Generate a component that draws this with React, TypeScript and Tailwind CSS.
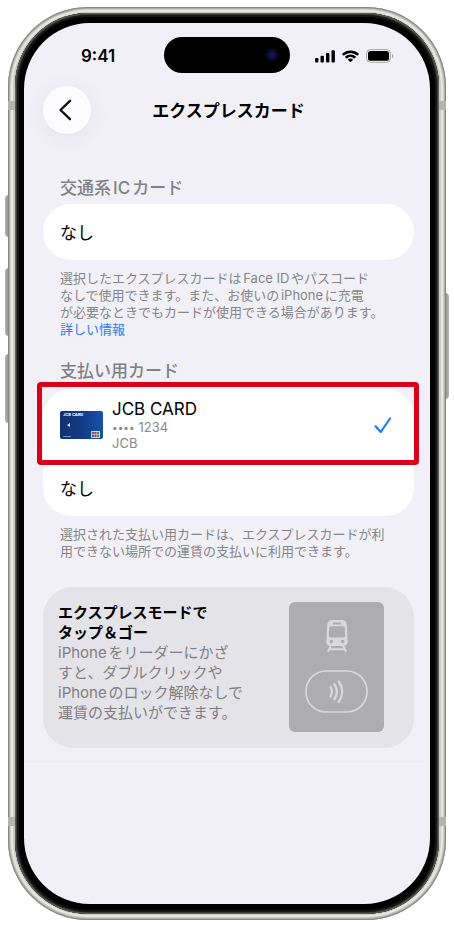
import React, { useState } from "react";

function StatusBar() {
  return (
    <div className="grid h-[63px] grid-cols-[1fr_126px_1fr] pt-[14px]">
      <div className="flex h-[38px] items-center pl-[57px] text-[17px] font-semibold leading-5">9:41</div>
      <div className="flex h-9 items-center justify-end rounded-full bg-black pr-3">
        <span className="flex size-3 items-center justify-center rounded-full bg-[#0b0b2c]">
          <span className="size-1.5 rounded-full bg-[#14145c]" />
        </span>
      </div>
      <div className="flex h-[38px] items-center justify-end gap-[7px] pr-9">
        <svg width="20" height="13" viewBox="0 0 20 13" aria-hidden="true">
          <rect x="0" y="8" width="3.4" height="4.5" rx="1" />
          <rect x="5.5" y="5.7" width="3.4" height="6.8" rx="1" />
          <rect x="11" y="3" width="3.4" height="9.5" rx="1" />
          <rect x="16.5" y="0.2" width="3.4" height="12.3" rx="1" />
        </svg>
        <svg width="17" height="13" viewBox="0 0 17 13" aria-hidden="true">
          <path d="M8.5 0.4C5.3 0.4 2.4 1.6 0.2 3.7a.4.4 0 0 0 0 .6l1.2 1.2c.2.2.4.2.6 0a9.4 9.4 0 0 1 13 0c.2.2.4.2.6 0l1.2-1.2a.4.4 0 0 0 0-.6A12 12 0 0 0 8.5.4Z" />
          <path d="M8.5 4.5c-2 0-3.9.8-5.3 2.1a.4.4 0 0 0 0 .6l1.2 1.2c.2.2.4.2.6 0a5.2 5.2 0 0 1 7 0c.2.2.4.2.6 0l1.2-1.2a.4.4 0 0 0 0-.6A7.7 7.7 0 0 0 8.5 4.5Z" />
          <path d="M8.5 8.5c-1 0-1.8.4-2.4.9a.4.4 0 0 0 0 .6l2.100 2.100c.2.2.4.2.6 0l2.100-2.100a.4.4 0 0 0 0-.6c-.6-.5-1.400-.9-2.400-.9Z" />
        </svg>
        <svg width="28" height="14" viewBox="0 0 28 14" aria-hidden="true">
          <rect x="0.5" y="0.5" width="24" height="12.8" rx="4" fill="none" stroke="#a9a8ad" />
          <rect x="2" y="2" width="21" height="9.8" rx="2.6" />
          <path d="M26 4.7v4.6c.9-.4 1.5-1.3 1.5-2.3S26.9 5.100 26 4.700Z" fill="#a9a8ad" />
        </svg>
      </div>
    </div>
  );
}

function CardArt() {
  return (
    <div className="flex h-[28px] w-[43px] shrink-0 flex-col justify-between rounded-[2px] bg-linear-to-r from-[#12306e] via-[#123a86] to-[#1753a8] px-[3px] py-px text-white">
      <span className="whitespace-nowrap text-[4px] font-bold leading-[6px]">JCB CARD</span>
      <svg width="5" height="4" viewBox="0 0 5 4" className="ml-[3px]" aria-hidden="true">
        <path d="M4 0 1 2l3 2Z" fill="#dfe6f5" />
      </svg>
      <div className="flex items-end justify-between">
        <span className="mb-px h-px w-2 bg-[#6f8ec4]" />
        <svg width="9" height="7" viewBox="0 0 9 7" aria-hidden="true">
          <rect width="9" height="7" rx="1" fill="#f2f2f2" />
          <rect x="0.800" y="0.800" width="2.200" height="5.400" rx=".6" fill="#2760b8" />
          <rect x="3.400" y="0.800" width="2.200" height="5.400" rx=".6" fill="#d81e3c" />
          <rect x="6" y="0.800" width="2.200" height="5.400" rx=".6" fill="#239a4b" />
          <path d="M1 3.500h7" stroke="#f2f2f2" strokeWidth=".6" />
        </svg>
      </div>
    </div>
  );
}

function ReaderArt() {
  return (
    <div className="flex h-[130px] w-[95px] shrink-0 flex-col items-center rounded-md bg-[#adadb0] pt-[18px]">
      <svg width="22" height="32" viewBox="0 0 22 32" aria-hidden="true">
        <path
          fill="#d9d9dc"
          fillRule="evenodd"
          d="M6.500 0h9C18.800 0 20.600 1.800 20.800 5L21.600 21.500c.1 2.800-1.500 4.500-4.300 4.500H4.700C1.900 26 .3 24.300.4 21.500L1.200 5C1.400 1.800 3.200 0 6.500 0ZM7.700 2.600a1 1 0 0 0 0 2h6.600a1 1 0 0 0 0-2ZM5.300 6.200c-1.300 0-2.100.8-2.200 2.100L2.800 15.200c0 1.500.8 2.400 2.200 2.400h12c1.400 0 2.200-.9 2.200-2.400L18.900 8.300c-.1-1.300-.9-2.100-2.200-2.100ZM5.300 19.800a1.800 1.800 0 1 0 0 3.600 1.800 1.800 0 0 0 0-3.600Zm11.400 0a1.800 1.800 0 1 0 0 3.600 1.800 1.800 0 0 0 0-3.600Z"
        />
        <path d="M4.800 26 2.300 31M17.200 26l2.500 5M4 29.300h14" stroke="#d9d9dc" strokeWidth="1.900" strokeLinecap="round" fill="none" />
      </svg>
      <svg width="63" height="43" viewBox="0 0 63 43" className="mt-[18px]" fill="none" stroke="#d9d9dc" strokeLinecap="round" aria-hidden="true">
        <rect x="1" y="1" width="61" height="41" rx="20" strokeWidth="1.700" />
        <path d="M25.500 17q2.800 4.500 0 9.500M29.500 14.300q4.800 7.200 0 14.800M33.800 11.500q7 10 0 20.400" strokeWidth="2.300" />
      </svg>
    </div>
  );
}

function Check() {
  return (
    <svg width="18" height="17" viewBox="0 0 18 17" className="invisible shrink-0 peer-checked:visible" aria-hidden="true">
      <path d="M1.500 9.300 6.800 15 16 1.500" fill="none" stroke="#1f7cf5" strokeWidth="2.200" strokeLinecap="round" strokeLinejoin="round" />
    </svg>
  );
}

function SectionTitle({ children }: { children: React.ReactNode }) {
  return <h2 className="px-[17px] text-[17px] font-medium leading-6 text-[#818085]">{children}</h2>;
}

function Note({ children }: { children: React.ReactNode }) {
  return <p className="mt-[10px] whitespace-nowrap px-[17px] text-[13px] leading-[17px] text-[#86858a]">{children}</p>;
}

export default function App() {
  const [card, setCard] = useState("jcb");

  return (
    <main className="min-h-screen bg-white px-2 py-[7px] font-['Inter','Noto_Sans_CJK_JP',sans-serif] text-black [text-autospace:normal]">
      <div className="relative">
        <span className="absolute -left-[3px] top-[188px] h-[42px] w-1 rounded-l-sm bg-linear-to-r from-[#b4b4b1] to-[#8d8d8a]" />
        <span className="absolute -left-[3px] top-[261px] h-[68px] w-1 rounded-l-sm bg-linear-to-r from-[#b4b4b1] to-[#8d8d8a]" />
        <span className="absolute -left-[3px] top-[347px] h-[69px] w-1 rounded-l-sm bg-linear-to-r from-[#b4b4b1] to-[#8d8d8a]" />
        <span className="absolute -right-[3px] top-[286px] h-[106px] w-1 rounded-r-sm bg-linear-to-l from-[#b4b4b1] to-[#8d8d8a]" />

        <div className="relative rounded-[80px] bg-[#c9c9c6] px-[7px] py-[6px] shadow-[inset_0_0_0_1px_#868684,inset_0_0_0_2px_#b0b0ae,inset_0_0_0_3px_#cdcdca,inset_0_0_0_5px_#e6e6e3]">
          <span className="absolute left-0 top-[94px] h-[9px] w-[7px] bg-[#b4b4ad]" />
          <span className="absolute right-0 top-[94px] h-[9px] w-[7px] bg-[#b4b4ad]" />
          <span className="absolute bottom-[94px] left-0 h-[9px] w-[7px] bg-[#b4b4ad]" />
          <span className="absolute bottom-[94px] right-0 h-[9px] w-[7px] bg-[#b4b4ad]" />

          <div className="rounded-[73px] bg-black px-[9px] py-[10px] shadow-[inset_0_0_0_1px_#5c5c5b,inset_0_0_0_2px_#3c3c3c,inset_0_0_0_4px_#161616]">
            <div className="overflow-hidden rounded-[66px] bg-[#f1f0f6]">
              <StatusBar />

              <header className="grid grid-cols-[48px_1fr_48px] items-center pl-[19px] pr-4">
                <button
                  type="button"
                  aria-label="戻る"
                  className="flex size-12 items-center justify-center rounded-full bg-[#fcfcff] pr-1 shadow-[0_4px_24px_#0000000f]"
                >
                  <svg width="14" height="22" viewBox="0 0 14 22" aria-hidden="true">
                    <path d="M12 1.800 2.500 11 12 20.200" fill="none" stroke="#111" strokeWidth="2.400" strokeLinecap="round" strokeLinejoin="round" />
                  </svg>
                </button>
                <h1 className="pt-0.5 text-center text-[17px] font-bold leading-6">エクスプレスカード</h1>
              </header>

              <div className="pl-[19px] pr-4 pt-[42px]">
                <section>
                  <SectionTitle>交通系ICカード</SectionTitle>
                  <button type="button" className="mt-1 flex h-14 w-full items-center rounded-[28px] bg-white px-[17px] pt-0.5 text-[17px] leading-6">
                    なし
                  </button>
                  <Note>
                    選択したエクスプレスカードはFace IDやパスコード
                    <br />
                    なしで使用できます。また、お使いのiPhoneに充電
                    <br />
                    が必要なときでもカードが使用できる場合があります。
                    <br />
                    <a href="#details" className="text-[#2b7cf6]">
                      詳しい情報
                    </a>
                  </Note>
                </section>

                <section className="mt-[21px]">
                  <SectionTitle>支払い用カード</SectionTitle>
                  <div className="mt-1.5 rounded-[28px] bg-white">
                    <label className="relative flex items-center pb-[9px] pl-[17px] pr-[22px] pt-[10px]">
                      <input type="radio" name="payment-card" className="peer sr-only" checked={card === "jcb"} onChange={() => setCard("jcb")} />
                      <CardArt />
                      <span className="ml-[9px] flex flex-1 flex-col text-[13px] leading-4 text-[#87868b]">
                        <span className="text-[17px] leading-5 text-black">JCB CARD</span>
                        <span className="flex items-center gap-1">
                          <span className="text-[10px]">••••</span>
                          <span>1234</span>
                        </span>
                        <span>JCB</span>
                      </span>
                      <span className="pointer-events-none absolute -bottom-[5px] -left-1.5 -right-[5px] -top-[7px] rounded border-[5px] border-[#d9001b]" />
                      <Check />
                    </label>
                    <label className="flex h-14 items-center justify-between pl-[17px] pr-[22px] pt-0.5 text-[17px] leading-6">
                      <input type="radio" name="payment-card" className="peer sr-only" checked={card === "none"} onChange={() => setCard("none")} />
                      なし
                      <Check />
                    </label>
                  </div>
                  <Note>
                    選択された支払い用カードは、エクスプレスカードが利
                    <br />
                    用できない場所での運賃の支払いに利用できます。
                  </Note>
                </section>

                <section className="mt-[27px] flex justify-between rounded-[30px] bg-[#e4e3e8] pb-4 pl-[15px] pr-[30px] pt-[15px]">
                  <div className="whitespace-nowrap pt-px text-[15px] leading-5">
                    <h3 className="font-bold">
                      エクスプレスモードで
                      <br />
                      タップ＆ゴー
                    </h3>
                    <p className="text-[#7f7e83]">
                      iPhoneをリーダーにかざ
                      <br />
                      すと、ダブルクリックや
                      <br />
                      iPhoneのロック解除なしで
                      <br />
                      運賃の支払いができます。
                    </p>
                  </div>
                  <ReaderArt />
                </section>
              </div>

              <div className="mt-[13px] h-[143px] border-t border-[#ebebec]" />
            </div>
          </div>
        </div>
      </div>
    </main>
  );
}
